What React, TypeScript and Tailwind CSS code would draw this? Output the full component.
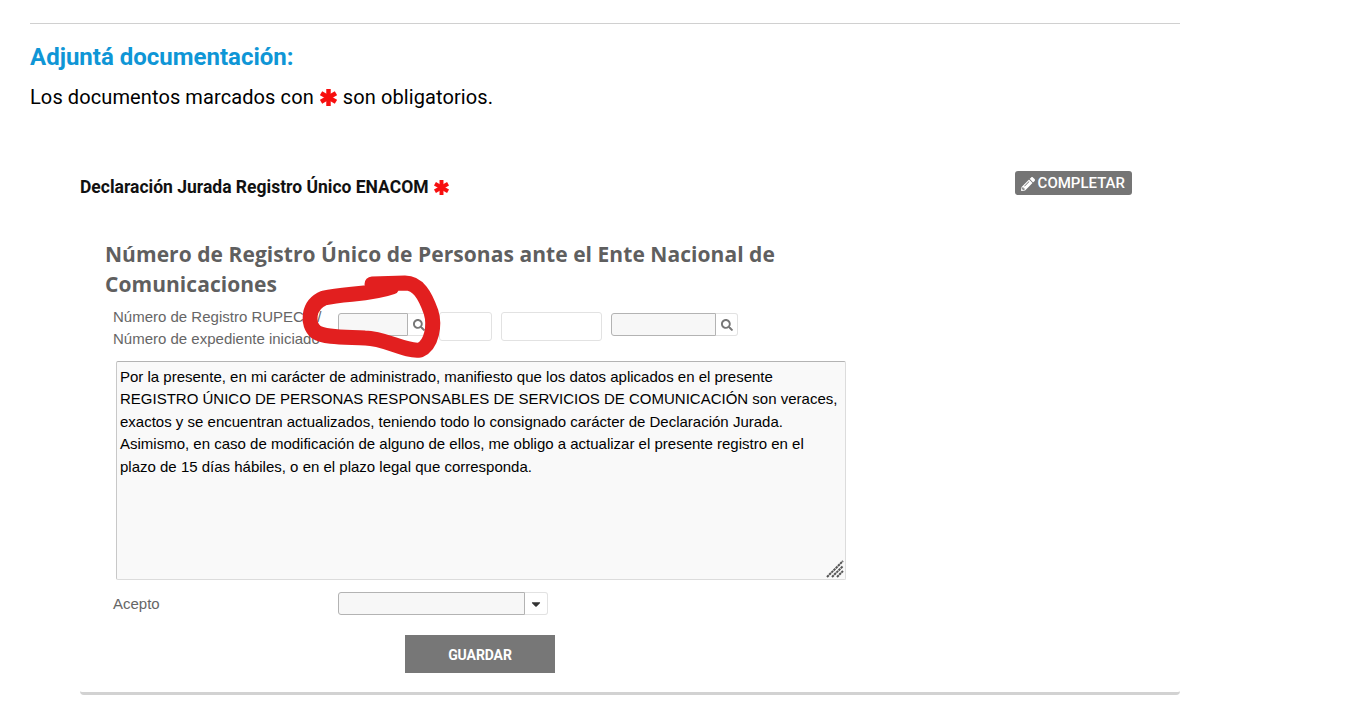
import React from 'react';
import { FaCaretDown, FaPencilAlt, FaSearch } from 'react-icons/fa';

function Star({ className }: { className: string }) {
  return (
    <svg className={className} viewBox="0 0 16 16" stroke="#f70f0f" strokeWidth="4.2">
      <line x1="8" y1="0" x2="8" y2="16" />
      <line x1="1" y1="4" x2="15" y2="12" />
      <line x1="1" y1="12" x2="15" y2="4" />
    </svg>
  );
}

function Lookup({ inputWidth }: { inputWidth: string }) {
  return (
    <div className="flex items-stretch h-[23px]">
      <div className={`${inputWidth} bg-[#f7f7f7] border border-[#b3b3b3] rounded-l-[3px]`} />
      <div className="w-[22px] flex items-center justify-center bg-white border border-l-0 border-[#e2e2e2] rounded-r-[3px]">
        <FaSearch className="w-[12px] h-[12px] text-[#777]" />
      </div>
    </div>
  );
}

export default function App() {
  return (
    <div className="relative w-[1357px] h-[727px] bg-white overflow-hidden font-['Roboto',sans-serif] text-black">
      <div className="w-[1150px] ml-[30px] pt-[23px]">
        <hr className="border-0 border-t border-[#d0d0d0]" />
        <h2 className="mt-[17px] text-[24px] leading-[32px] font-bold text-[#0f96d6]">Adjuntá documentación:</h2>
        <p className="mt-[10px] text-[20px] leading-[28px] tracking-[0.1px] flex items-center">
          Los documentos marcados con
          <Star className="mx-[6px] w-[17px] h-[17px]" />
          son obligatorios.
        </p>

        <section className="ml-[50px] mt-[60px] h-[524px] rounded-b-[4px] border-b-[3px] border-[#d2d2d2]">
          <div className="flex items-start justify-between pr-[48px]">
            <h3 className="mt-[4px] text-[17.5px] leading-[24px] font-bold flex items-center text-[#111]">
              Declaración Jurada Registro Único ENACOM
              <Star className="ml-[5px] w-[15px] h-[15px]" />
            </h3>
            <button className="flex items-center gap-[3px] h-[24px] pl-[6px] pr-[7px] pt-[1px] rounded-[3px] bg-[#757575] text-white text-[15px] font-medium">
              <FaPencilAlt className="w-[14px] h-[14px]" />
              COMPLETAR
            </button>
          </div>

          <h4 className="mt-[40px] ml-[25px] w-[720px] font-['Open_Sans',sans-serif] text-[21px] leading-[30px] font-bold tracking-[0.05px] text-[#5f5f5f]">
            Número de Registro Único de Personas ante el Ente Nacional de Comunicaciones
          </h4>

          <div className="flex font-['Liberation_Sans',sans-serif]">
            <label className="ml-[33px] mt-[7px] w-[225px] text-[15px] leading-[22px] text-[#666]">
              Número de Registro RUPECA /<br />Número de expediente iniciado
            </label>
            <div className="flex items-start gap-[9px] mt-[14px]">
              <Lookup inputWidth="w-[70px]" />
              <div className="w-[53px] h-[29px] -mt-[1px] border border-[#e2e2e2] rounded-[3px]" />
              <div className="w-[101px] h-[29px] -mt-[1px] border border-[#e2e2e2] rounded-[3px]" />
              <Lookup inputWidth="w-[105px]" />
            </div>
          </div>

          <div className="relative ml-[36px] mt-[11px] w-[730px] h-[219px] px-[3px] py-[4px] bg-[#f9f9f9] border border-[#dcdcdc] border-t-[#b3b3b3] border-l-[#c8c8c8] rounded-[2px] font-['Liberation_Sans',sans-serif] text-[15px] leading-[22.4px] text-black">
            Por la presente, en mi carácter de administrado, manifiesto que los datos aplicados en el presente REGISTRO ÚNICO DE PERSONAS RESPONSABLES DE SERVICIOS DE COMUNICACIÓN son veraces, exactos y se encuentran actualizados, teniendo todo lo consignado carácter de Declaración Jurada. Asimismo, en caso de modificación de alguno de ellos, me obligo a actualizar el presente registro en el plazo de 15 días hábiles, o en el plazo legal que corresponda.
            <svg className="absolute right-[1px] bottom-[1px] w-[18px] h-[18px]" viewBox="0 0 18 18" stroke="#555" strokeWidth="2" strokeDasharray="2.5 0.6">
              <line x1="1" y1="17" x2="17" y2="1" />
              <line x1="6" y1="17" x2="17" y2="6" />
              <line x1="11" y1="17" x2="17" y2="11" />
            </svg>
          </div>

          <div className="flex items-start mt-[12px] font-['Liberation_Sans',sans-serif]">
            <label className="ml-[33px] w-[225px] text-[15px] leading-[24px] text-[#666]">Acepto</label>
            <div className="flex h-[23px]">
              <div className="w-[187px] bg-[#f7f7f7] border border-[#b3b3b3] rounded-l-[3px]" />
              <div className="w-[23px] flex items-center justify-center bg-white border border-l-0 border-[#e2e2e2] rounded-r-[3px]">
                <FaCaretDown className="w-[14px] h-[14px] text-[#333]" />
              </div>
            </div>
          </div>

          <button className="block ml-[325px] mt-[19px] pt-[2px] w-[150px] h-[38px] bg-[#777] text-white text-[14px] font-bold tracking-[-0.1px]">
            GUARDAR
          </button>
        </section>
      </div>

      {/* red marker scribble drawn on top of the screenshot */}
      <svg className="absolute left-0 top-0 w-[1357px] h-[727px] pointer-events-none" viewBox="0 0 1357 727" fill="none">
        <path
          d="M372 284 L405 283 C418 283 425 295 431 312 C435 325 432 345 420 350 C405 352 385 338 365 338 C345 337 325 338 316 332 C307 325 307 305 324 298 C345 293 370 295 392 287"
          stroke="#e21f1f"
          strokeWidth="15"
          strokeLinecap="round"
          strokeLinejoin="round"
        />
      </svg>
    </div>
  );
}
